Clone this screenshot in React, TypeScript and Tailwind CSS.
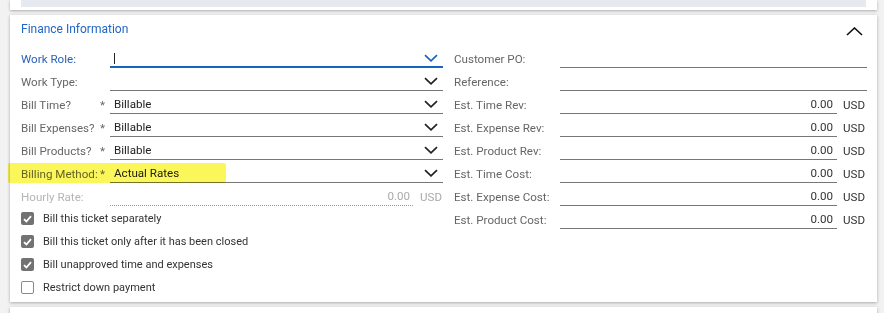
import React from "react";

const font = { fontFamily: "Roboto, 'Liberation Sans', Arial, sans-serif" };

function ChevDown({ color = "#222" }: { color?: string }) {
  return (
    <svg width="14" height="8" viewBox="0 0 14 8" className="shrink-0">
      <polyline points="1,1.2 7,6.8 13,1.2" fill="none" stroke={color} strokeWidth="1.7" />
    </svg>
  );
}

function LeftRow({
  label,
  req,
  value,
  labelClass = "text-[#666]",
  focused,
}: {
  label: string;
  req?: boolean;
  value?: string;
  labelClass?: string;
  focused?: boolean;
}) {
  return (
    <div className="flex h-[23px] items-start pt-[2px]">
      <div className={`flex w-[89px] shrink-0 h-[19px] items-center whitespace-nowrap ${labelClass}`}>
        <span className="flex-1">{label}</span>
        {req && <span className="mr-[5px] text-[#666]">*</span>}
      </div>
      <div
        className={`flex flex-1 h-[19px] items-center pl-[4px] pr-[5px] ${
          focused ? "border-b-2 border-[#1565c0]" : "border-b border-[#777]"
        }`}
      >
        <span className="flex-1 text-[#222]">
          {focused ? <span className="inline-block w-px h-[11px] bg-[#222] align-middle" /> : value}
        </span>
        <ChevDown color={focused ? "#1565c0" : "#222"} />
      </div>
    </div>
  );
}

function RightRow({ label, usd }: { label: string; usd?: boolean }) {
  return (
    <div className="flex h-[23px] items-start pt-[2px]">
      <div className="w-[106px] shrink-0 h-[19px] flex items-center whitespace-nowrap text-[#666]">{label}</div>
      {usd ? (
        <>
          <div className="w-[277px] h-[19px] border-b border-[#777] flex items-center justify-end pr-[4px] text-[#333]">
            0.00
          </div>
          <div className="ml-[6px] h-[19px] flex items-center text-[#333]">USD</div>
        </>
      ) : (
        <div className="flex-1 h-[19px] border-b border-[#777]" />
      )}
    </div>
  );
}

function Check({ checked, label }: { checked: boolean; label: string }) {
  return (
    <div className="flex h-[23px] items-center">
      {checked ? (
        <div className="w-[13px] h-[13px] rounded-[2px] bg-[#727272] flex items-center justify-center">
          <svg width="9" height="8" viewBox="0 0 9 8">
            <polyline points="1,4.2 3.4,6.5 8,1.2" fill="none" stroke="#fff" strokeWidth="1.8" />
          </svg>
        </div>
      ) : (
        <div className="w-[13px] h-[13px] rounded-[2px] border border-[#8a8a8a] bg-white" />
      )}
      <span className="ml-[9px] text-[11px] text-[#333]">{label}</span>
    </div>
  );
}

export default function App() {
  return (
    <div className="w-[884px] h-[313px] overflow-hidden bg-[#f2f2f2] text-[11.6px] leading-[14px]" style={font}>
      <div className="ml-[10px] w-[867px] h-[10px] bg-white shadow-[0_1px_3px_rgba(0,0,0,0.3)] px-[11px]">
        <div className="h-[7px] bg-[#e6e9f0]" />
      </div>
      <div className="relative mt-[5px] ml-[10px] w-[867px] h-[287px] bg-white shadow-[0_1px_3px_rgba(0,0,0,0.3)] pl-[11px] pr-[10px]">
        <div className="flex h-[32px] items-start pt-[6px]">
          <span className="flex-1 text-[12px] leading-[16px] text-[#2266c4]">Finance Information</span>
          <svg width="17" height="9" viewBox="0 0 17 9" className="mt-[6px] mr-[4px]">
            <polyline points="1,8 8.5,1 16,8" fill="none" stroke="#111" strokeWidth="1.6" />
          </svg>
        </div>
        <div className="flex gap-[11px]">
          <div className="w-[422px] shrink-0">
            <LeftRow label="Work Role:" labelClass="text-[#2b5fb8]" focused />
            <LeftRow label="Work Type:" />
            <LeftRow label="Bill Time?" req value="Billable" />
            <LeftRow label="Bill Expenses?" req value="Billable" />
            <LeftRow label="Bill Products?" req value="Billable" />
            <LeftRow label="Billing Method:" req value="Actual Rates" />
            <div className="flex h-[23px] items-start pt-[2px]">
              <div className="w-[89px] shrink-0 h-[19px] flex items-center text-[#b5b5b5]">Hourly Rate:</div>
              <div className="w-[303px] h-[19px] border-b border-dotted border-[#999] flex items-center justify-end pr-[3px] text-[#aaa]">
                0.00
              </div>
              <div className="ml-[7px] h-[19px] flex items-center text-[#aaa]">USD</div>
            </div>
            <div className="-mt-[1px]">
              <Check checked label="Bill this ticket separately" />
              <Check checked label="Bill this ticket only after it has been closed" />
              <Check checked label="Bill unapproved time and expenses" />
              <Check checked={false} label="Restrict down payment" />
            </div>
          </div>
          <div className="flex-1">
            <RightRow label="Customer PO:" />
            <RightRow label="Reference:" />
            <RightRow label="Est. Time Rev:" usd />
            <RightRow label="Est. Expense Rev:" usd />
            <RightRow label="Est. Product Rev:" usd />
            <RightRow label="Est. Time Cost:" usd />
            <RightRow label="Est. Expense Cost:" usd />
            <RightRow label="Est. Product Cost:" usd />
          </div>
        </div>
        <div className="absolute left-[-2px] top-[148px] w-[218px] h-[20px] bg-[#fbf75a] mix-blend-multiply rounded-[2px]" />
      </div>
      <div className="mt-[5px] ml-[10px] w-[867px] h-[20px] bg-white shadow-[0_1px_3px_rgba(0,0,0,0.3)]" />
    </div>
  );
}
